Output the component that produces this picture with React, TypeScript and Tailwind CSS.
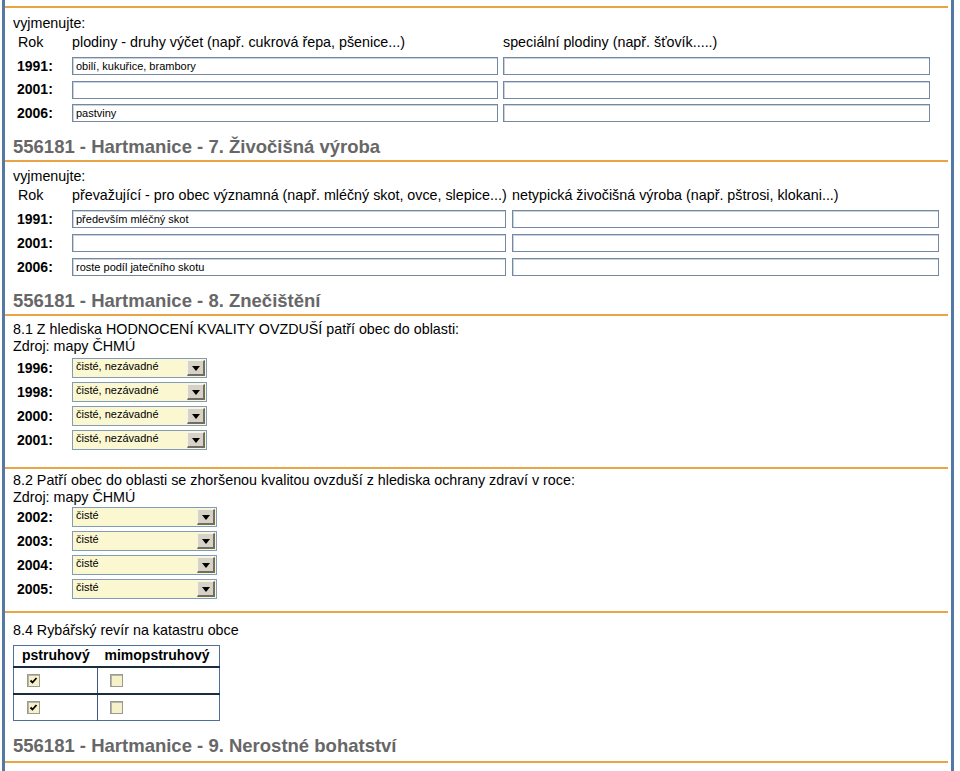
import React from "react";

const Orange = ({ className = "" }: { className?: string }) => (
  <div className={"h-[2px] mr-[3px] bg-[#e9a445] " + className} />
);

const Heading = ({ text, h, pb = "pb-[2px]" }: { text: string; h: string; pb?: string }) => (
  <div className={"flex items-end pl-[8px] " + pb + " " + h}>
    <div className="text-[18.5px] leading-[22px] font-bold text-[#676767]">{text}</div>
  </div>
);

const TextBox = ({ w, value = "" }: { w: string; value?: string }) => (
  <div
    className={
      "h-[18px] border border-[#7489a1] bg-white text-[11px] leading-[16px] pl-[3px] text-black shadow-[inset_1px_1px_0_#c9d3de] " +
      w
    }
  >
    {value}
  </div>
);

const Year = ({ y }: { y: string }) => (
  <div className="w-[59px] pl-[4px] text-[14px] font-bold text-black">{y}</div>
);

const Select = ({ w, value }: { w: string; value: string }) => (
  <div className={"flex h-[20px] border border-[#7f9db9] bg-[#fbf7d0] " + w}>
    <div className="flex-1 text-[11px] leading-[13px] pl-[3px] pt-[1px] text-black">{value}</div>
    <div className="w-[18px] my-[1px] mr-[1px] bg-[#d6d3c6] border-t border-l border-[#f4f3ee] border-b-[2px] border-r-[2px] border-b-[#6f6d66] border-r-[#6f6d66] flex items-center justify-center">
      <svg width="8" height="5" viewBox="0 0 8 5" className="mt-[2px]">
        <polygon points="0,0 8,0 4,5" fill="#000" />
      </svg>
    </div>
  </div>
);

const Check = ({ checked }: { checked: boolean }) => (
  <div className="w-[13px] h-[13px] border border-[#9a9a8e] bg-[#f6f1c9] shadow-[inset_1px_1px_0_#b5b4a6] flex items-center justify-center">
    {checked && (
      <svg width="9" height="9" viewBox="0 0 9 9">
        <polyline points="1.5,4.5 3.5,6.5 7.5,2" fill="none" stroke="#000" strokeWidth="1.8" />
      </svg>
    )}
  </div>
);

export default function App() {
  return (
    <div className="w-[960px] h-[771px] bg-white overflow-hidden font-['Liberation_Sans',Arial,sans-serif] text-black">
      <div className="ml-[2px] w-[952px] h-[771px] border-l-[3px] border-r-[3px] border-[#5479a5]">
        {/* Section 6 end */}
        <div className="h-[6px]" />
        <Orange />
        <div className="pl-[8px] mt-[6px] h-[18px] text-[14.3px] leading-[18px]">vyjmenujte:</div>
        <div className="flex items-center h-[22px] pl-[8px] text-[14.3px]">
          <div className="w-[59px] pl-[5px]">Rok</div>
          <div className="w-[431px]">plodiny - druhy výčet (např. cukrová řepa, pšenice...)</div>
          <div>speciální plodiny (např. šťovík.....)</div>
        </div>
        {[
          ["1991:", "obilí, kukuřice, brambory"],
          ["2001:", ""],
          ["2006:", "pastviny"],
        ].map(([y, v], i) => (
          <div key={y} className={"flex items-center pl-[8px] " + (i === 1 ? "h-[23px]" : "h-[24px]")}>
            <Year y={y} />
            <TextBox w="w-[426px]" value={v} />
            <div className="w-[5px]" />
            <TextBox w="w-[427px]" />
          </div>
        ))}
        <Heading text="556181 - Hartmanice - 7. Živočišná výroba" h="h-[35px]" />
        <Orange />

        {/* Section 7 */}
        <div className="pl-[8px] mt-[5px] h-[18px] text-[14.3px] leading-[18px]">vyjmenujte:</div>
        <div className="flex items-center h-[22px] pl-[8px] text-[14.3px]">
          <div className="w-[59px] pl-[5px]">Rok</div>
          <div className="w-[440px]">převažující - pro obec významná (např. mléčný skot, ovce, slepice...)</div>
          <div>netypická živočišná výroba (např. pštrosi, klokani...)</div>
        </div>
        {[
          ["1991:", "především mléčný skot"],
          ["2001:", ""],
          ["2006:", "roste podíl jatečního skotu"],
        ].map(([y, v]) => (
          <div key={y} className="flex items-center pl-[8px] h-[24px]">
            <Year y={y} />
            <TextBox w="w-[434px]" value={v} />
            <div className="w-[6px]" />
            <TextBox w="w-[427px]" />
          </div>
        ))}
        <Heading text="556181 - Hartmanice - 8. Znečištění" h="h-[35px]" />
        <Orange />

        {/* 8.1 */}
        <div className="pl-[8px] mt-[5px] h-[17px] text-[14.3px] leading-[17px]">
          8.1 Z hlediska HODNOCENÍ KVALITY OVZDUŠÍ patří obec do oblasti:
        </div>
        <div className="pl-[8px] h-[17px] text-[14.3px] leading-[17px]">Zdroj: mapy ČHMÚ</div>
        <div className="mt-[1px]">
          {["1996:", "1998:", "2000:", "2001:"].map((y) => (
            <div key={y} className="flex items-center pl-[8px] h-[24px]">
              <Year y={y} />
              <Select w="w-[135px]" value="čisté, nezávadné" />
            </div>
          ))}
        </div>
        <div className="h-[15px]" />
        <Orange />

        {/* 8.2 */}
        <div className="pl-[8px] mt-[3px] h-[17px] text-[14.3px] leading-[17px]">
          8.2 Patří obec do oblasti se zhoršenou kvalitou ovzduší z hlediska ochrany zdraví v roce:
        </div>
        <div className="pl-[8px] h-[16px] text-[14.3px] leading-[16px]">Zdroj: mapy ČHMÚ</div>
        <div>
          {["2002:", "2003:", "2004:", "2005:"].map((y) => (
            <div key={y} className="flex items-center pl-[8px] h-[24px]">
              <Year y={y} />
              <Select w="w-[145px]" value="čisté" />
            </div>
          ))}
        </div>
        <div className="h-[10px]" />
        <Orange />

        {/* 8.4 */}
        <div className="pl-[8px] mt-[8px] h-[18px] text-[14.3px] leading-[18px]">8.4 Rybářský revír na katastru obce</div>
        <div className="pl-[8px] mt-[6px]">
          <table className="border border-[#4d6f9c] border-collapse w-[207px]">
            <thead>
              <tr className="h-[21px] border-b-[2px] border-[#1d2b3f]">
                <th className="w-[84px] text-left pl-[8px] text-[14px] font-bold leading-[17px]">pstruhový</th>
                <th className="text-left pl-[7px] text-[14px] font-bold leading-[17px]">mimopstruhový</th>
              </tr>
            </thead>
            <tbody>
              {[0, 1].map((r) => (
                <tr key={r} className={"h-[27px] " + (r === 0 ? "border-b-[2px] border-[#1d2b3f]" : "")}>
                  <td className="pl-[13px] border-r border-[#3c5a85]">
                    <Check checked={true} />
                  </td>
                  <td className="pl-[12px]">
                    <Check checked={false} />
                  </td>
                </tr>
              ))}
            </tbody>
          </table>
        </div>
        <Heading text="556181 - Hartmanice - 9. Nerostné bohatství" h="h-[40px]" pb="pb-[4px]" />
        <Orange />
      </div>
    </div>
  );
}
